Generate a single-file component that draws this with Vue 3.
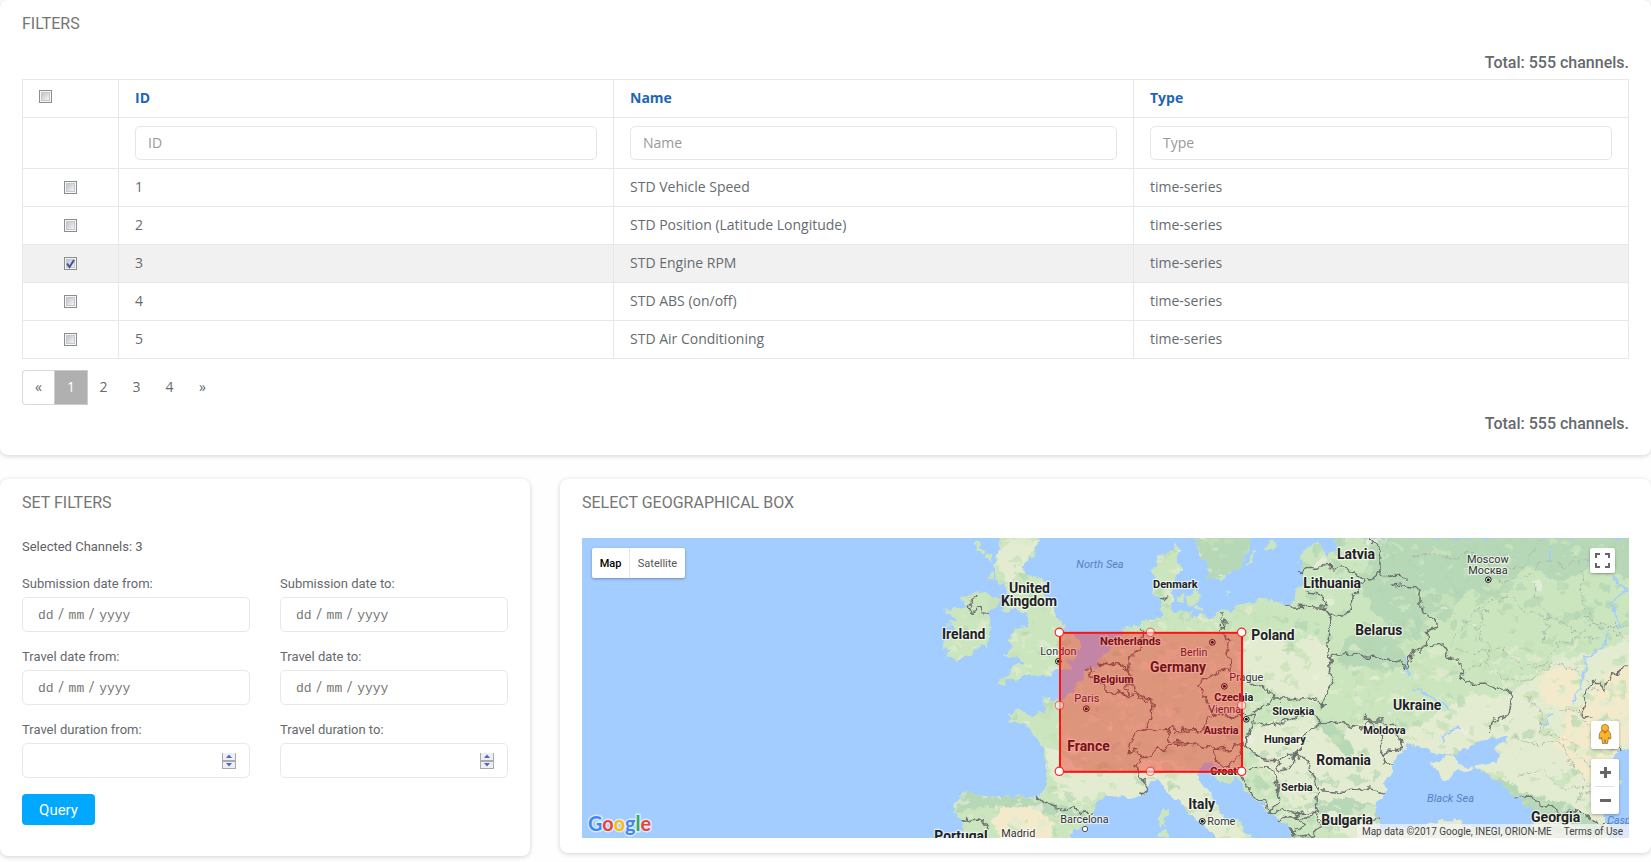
<script setup>
import { ref } from 'vue'

const rows = ref([
  { id: 1, name: 'STD Vehicle Speed', on: false },
  { id: 2, name: 'STD Position (Latitude Longitude)', on: false },
  { id: 3, name: 'STD Engine RPM', on: true },
  { id: 4, name: 'STD ABS (on/off)', on: false },
  { id: 5, name: 'STD Air Conditioning', on: false }
])
const columns = ['ID', 'Name', 'Type']
const pages = ['«', '1', '2', '3', '4', '»']
const fields = [
  { label: 'Submission date from:', date: true },
  { label: 'Submission date to:', date: true },
  { label: 'Travel date from:', date: true },
  { label: 'Travel date to:', date: true },
  { label: 'Travel duration from:', date: false },
  { label: 'Travel duration to:', date: false }
]

// Map drawing units: three per CSS pixel.
const mainland = 'M185 924L190 890 175 870 165 820 198 790 225 788 280 800 340 798 420 803 437 780 445 740 440 690 438 660 415 630 395 610 370 582 330 578 335 562 318 552 350 542 382 548 400 555 432 548 425 500 420 492 440 495 445 508 470 512 500 505 520 480 533 455 560 432 590 400 615 370 640 335 670 312 665 295 690 286 720 290 728 272 765 272 780 260 785 235 775 200 762 190 760 130 768 90 790 75 812 70 830 35 835 30 838 60 832 90 845 110 825 140 820 180 815 215 825 245 850 255 880 250 868 268 905 250 935 262 970 244 1000 240 1030 222 1075 210 1105 205 1125 222 1160 228 1185 205 1198 180 1205 120 1198 90 1225 50 1250 40 1280 75 1310 60 1300 24H2200V655L2150 665 2130 700 2160 760 2120 810 2110 860 2140 940H1180L1170 895 1140 870 1110 845 1070 815 1030 770 1010 745 965 755 945 735 955 715 925 690 900 710 895 750 935 800 955 850 1020 880 1070 940H970L930 900 890 870 850 830 810 790 770 750 740 765 725 792 690 808 650 800 610 795 585 820 590 855 545 890 510 915 505 940H185Z'
const britain = 'M290 10L415 10 413 50 400 80 365 118 385 135 420 140 435 190 470 240 475 265 490 285 488 305 520 312 540 325 540 355 520 385 505 395 510 410 480 420 430 435 390 435 370 438 350 450 330 445 310 468 290 466 320 440 345 405 372 405 375 398 350 385 305 382 330 365 335 350 325 320 355 290 378 285 378 262 385 250 340 240 305 242 310 225 335 200 320 175 310 150 290 170 285 120 280 100 300 60Z'
const ireland = 'M225 180L240 185 270 185 290 215 288 235 265 245 272 290 265 350 240 352 215 375 160 392 150 382 128 378 155 360 125 345 148 330 140 310 160 300 140 285 165 270 135 240 165 235 195 230 188 205Z'
const sweden = 'M880 10L895 60 912 90 920 130 918 150 955 145 970 155 990 120 1020 115 1030 90 1045 50 1050 10Z'
const islands = 'M862 195l25-15 12 20-5 20-25 5zM830 200l20-8 8 25-20 5zM880 225l30 8-5 12-25-4zM1100 35l20-8 5 20-20 22-5-10zM980 185l14 2-2 8-12-3zM1045 90l15-25 5 4-22 48-4-3zM782 850l15-15 5 20-8 32-15-5-5-20zM775 905l25-6 8 25h-35zM228 35l12-5 8 40-15-4zM255 65l22 5-5 22-15-12zM265 132l15-4-6 24-14 4z'
const blackSea = 'M1475 720L1465 740 1455 780 1425 830 1440 890 1470 896 1580 885 1620 870 1672 868 1710 890 1800 905 1890 890 1902 850 1850 800 1800 760 1760 735 1735 712 1720 718 1730 705 1770 700 1800 680 1780 655 1822 620 1770 625 1720 640 1680 662 1650 675 1600 668 1580 655 1530 648 1495 670 1480 700Z'
const crimea = 'M1590 702L1620 690 1650 672 1668 685 1680 705 1725 712 1715 724 1670 728 1635 750 1625 752 1620 735Z'

const pale = [
  'M440 650L500 690 590 740 700 760 720 700 800 690 900 740 930 790 980 870 1060 924H700V780L600 790 570 830 470 800Z',
  'M1040 330L1110 300 1180 350 1230 310 1290 360 1290 480 1250 520 1130 490 1080 450 1030 430 1010 370Z',
  'M1020 640L1080 580 1200 570 1260 570 1330 590 1420 565 1500 610 1580 570 1700 500 1840 490 1960 400 2200 330V940H1400L1300 900 1180 830 1100 720Z',
  'M590 740l80-30 60 50-20 60-100-25z', 'M300 30l110 8-30 70-60 60-30-90z'
]
const dark = [
  'M1430 10L2200 10 2200 150 2060 120 1980 160 1880 110 1790 200 1700 180 1640 280 1560 240 1560 330 1450 290 1380 170Z',
  'M880 10L1050 10 1030 110 920 150Z',
  'M1330 330L1440 300 1500 350 1530 400 1450 430 1400 410 1310 400Z',
  'M165 800l60-15 130 12 90 20 120 25-20 35-120-30-160-20-90 20z',
  'M1250 560l60 30 50 70 10 40-50-40-40-50-40-20z',
  'M1740 715l80 40 70 40 100 20 130 80-20 30-100-50-90-20-90-40z',
  'M1240 820l100-20 90 25-40 30-140-5z'
]
const tan = [
  'M2200 400L2100 440 2070 500 1990 560 1960 640 2010 700 2090 790 2120 700 2200 660Z',
  'M310 830l90 5 60 40-10 69H300l-20-70z',
  'M1910 420l100-10 40 50-40 80-80-30z'
]

// Seeded facets give the terrain its fine mottling.
let seed = 7349
const rnd = () => {
  seed = (seed * 1664525 + 1013904223) >>> 0
  return seed / 4294967296
}
const facets = []
for (let i = 0; i < 1900; i++) {
  const x = 130 + rnd() * 2060
  const y = 24 + rnd() * 900
  const r = 4 + rnd() * 18
  const turn = rnd() * 6
  let d = ''
  for (let k = 0; k < 5; k++) {
    const a = turn + k * 1.256
    const q = r * (0.3 + rnd() * 0.9)
    d += (k ? 'L' : 'M') + (x + Math.cos(a) * q * 1.3).toFixed(0) + ' ' + (y + Math.sin(a) * q * 0.85).toFixed(0)
  }
  const t = rnd()
  const north = y < 330 && x > 1200
  const balkans = y > 640 && x > 1000 && x < 1480
  let c = '#b4d6b0'
  if (t < 0.42) c = north || balkans ? '#b2d5b2' : '#c4e1b5'
  else if (t < 0.84) c = north ? '#cbe6bf' : '#e1ebce'
  else if (t > 0.96) c = '#f0f0e4'
  facets.push({ d: d + 'Z', c })
}

const borders = [
  'M232 190l-12 20-8 15-10 5 5 12 20 4 12-15 10 5 5 12 15 3',
  'M178 874l18-10 12 10 25-4 20 2-3 12 18 2-5 15-15 8-10 15',
  'M418 804l15 15 40 10 12 10 25-5 20 5 15 12 20-5 20 5',
  'M592 402l30 6 25-12 28 10 10 15-3 30 12 15 5 20 20 12 40 15-8 50-12 35',
  'M568 415l5 20 35 30 20 25 30-5 20 15 30-2 15 10 20 10',
  'M725 296l-5 60-30 20-5 45 5 30-12 25 10 20',
  'M775 199l28 5', 'M965 255l8 20-5 30 15 30-5 30 12 25 3 35',
  'M990 425l-25-5-35 20-35 20 8 20 15 30 5 20 30 25 50 10 20-15 40 5',
  'M740 599l50 5 20-15 15 15 50-5 40 0 5-25 20-20',
  'M800 595l10 35 45 5 35 10 30 8 60 3 50-12 10 15',
  'M740 598l-25 5-20 35-10 30 25-8 15 20 30-5 20-30 15 15 30-20 30 0',
  'M730 682l-20 20 10 40 20 15-5 30-20-4 M942 660l5 35 20 15 40-10 15-50',
  'M1045 460l30 10 30 5 20 35 50 0 50-5 50 20',
  'M1120 505l-35 30-25 10 5 30 35 15 80-25 15-10 30 0 45 20 30 3',
  'M1060 575l-20 60 0 20 45 30 40 5 50-10 25-20 20-50 45-35 70 8 50 10 25-20 40 0',
  'M1150 227l128 5 15 30-5 60-10 30 12 50-2 25 13 20-35 70-5 20',
  'M1200 128l15-15 60-3 50 0 25 10 40 30-15 30-15 20-5 40-15 5-30 15-15-5-15-20-5-20-5-20-50-10',
  'M1395 150l20-3 25-20 0-40-8-40-20-20M1440 127l30 12 20-3 30 12',
  'M1285 390l30-15 60-5 20 12 50 0 40 10 25 12 15 4 15-40 20-8 15-8 5-50 20-8 12-5-5-20-25-10-5-20-20-20 0-30-15-20-30-5-40 5',
  'M1582 350l50-5 15 35 35 20 10 55 30 5 35 0 30 20 10-10 40 20-5 30-5 35-50 20-8 25',
  'M1395 560l30 30 20 50-5 50 40 10M1440 690l30-30 15 0 25-5-5-40-25-25-30-10',
  'M1040 715l60-5 25 25 15 45-10 40-20 25M1025 740l35 60 40 30 20 15',
  'M1130 685l5 35 35-5 15-40 35 20 20 50 15 30-10 40 10 30-35 20-50-5-30 15',
  'M1260 782l50 5 60 0 30-10 55 10M1110 850l40-15 40 20 20 30-30 30-10-20',
  'M1180 865l25-15 40 0 20 35-30 30-50 5-10-25M1260 870l80 10 100-12',
  'M1847 802l35-5 40 30 25 0 30 20 60-10 35 30 50 15M2188 408l-60 30-15 45-30-30-25 30-5 40-10 30 35 15M2140 650l25 18'
]
const provinces = [
  'M1540 80l60-10 50 20 40-20 60 10 50 80 80-20 50-50 60 20 60-20 100 10',
  'M1660 330l40-60 60-50 70-20 50 50 80 10 80 50 60-40 80 60',
  'M1660 350l60 20 80-10 70 50 70-10 30-60 60-20 100 10',
  'M1690 420l60-20 60 50 80 0 70-50 70 20 70 70',
  'M1870 500l60 40-10 60 70 20 50 50 40 60 80 20',
  'M1840 620l60 30 80-20 30 70 50 60-30 60',
  'M1900 160l10 60 40 40-20 80M1760 240l-30 60 40 50-10 60M2020 60l30 60-10 100 50 70',
  'M2050 260l50 30 80 0M1850 740l80-20 60 60 50-10 60 30',
  'M1800 60l30 60 50-20 40-70M1980 540l50 0 50 70 40-10'
]
const rivers = [
  'M1955 45l2 60M2140 140l35 35-38 50 28 70M2130 300l-20 50-50 35-10 60-30 70',
  'M1540 475l40 20 40 20 30 25M1630 630l20-30 30-2M1950 555l-20 40', 'M1520 380v60'
]
const labels = [
  ['United', 327, 189, 123, 'b'], ['Kingdom', 303, 228, 168, 'b'], ['Ireland', 126, 327, 130, 'b'],
  ['North Sea', 529, 114, 142, 's'], ['London', 421, 375, 108, 'c'], ['Netherlands', 600, 345, 182, 'm'],
  ['Belgium', 580, 458, 121, 'm'], ['Paris', 523, 515, 75, 'c'], ['France', 502, 662, 127, 'b'],
  ['Germany', 750, 425, 168, 'b'], ['Barcelona', 481, 878, 145, 'c'], ['Madrid', 304, 922, 102, 'c'],
  ['Portugal', 103, 934, 160, 'b'], ['Denmark', 759, 173, 134, 'm'], ['Berlin', 841, 377, 81, 'c'],
  ['Prague', 988, 452, 102, 'c'], ['Czechia', 943, 513, 117, 'm'], ['Vienna', 925, 548, 98, 'c'],
  ['Austria', 911, 611, 105, 'm'], ['Croatia', 931, 734, 106, 'm'], ['Poland', 1054, 329, 130, 'b'],
  ['Latvia', 1311, 86, 114, 'b'], ['Lithuania', 1210, 173, 173, 'b'], ['Belarus', 1366, 315, 141, 'b'],
  ['Slovakia', 1117, 554, 126, 'm'], ['Hungary', 1092, 640, 125, 'm'], ['Romania', 1249, 705, 164, 'b'],
  ['Moldova', 1390, 612, 127, 'm'], ['Serbia', 1143, 782, 95, 'm'], ['Italy', 865, 838, 80, 'b'],
  ['Bulgaria', 1264, 884, 155, 'b'], ['Rome', 922, 884, 84, 'c'], ['Ukraine', 1479, 540, 145, 'b'],
  ['Moscow', 1701, 99, 125, 'c'], ['Москва', 1705, 132, 118, 'c'], ['Black Sea', 1581, 815, 141, 's'],
  ['Georgia', 1893, 876, 148, 'b'], ['Caspian Sea', 2122, 883, 172, 's']
]
const capitals = [[475, 394], [559, 536], [937, 337], [973, 469], [1039, 568], [907, 874], [1765, 149]]
const corners = [[478, 307], [1025, 307], [478, 724], [1025, 724]]
const middles = [[751, 307], [478, 526], [1025, 526], [751, 724]]
</script>

<template>
  <main class="page">
    <section class="card channels">
      <h2>FILTERS</h2>
      <p class="total">Total: 555 channels.</p>
      <table>
        <colgroup><col class="c0"><col class="c1"><col class="c2"><col class="c1"></colgroup>
        <tbody>
          <tr>
            <th class="all"><span class="check"></span></th>
            <th v-for="c in columns" :key="c">{{ c }}</th>
          </tr>
          <tr class="search">
            <td></td>
            <td v-for="c in columns" :key="c"><input type="text" :placeholder="c"></td>
          </tr>
          <tr v-for="r in rows" :key="r.id" :class="{ picked: r.on }">
            <td class="pick">
              <span class="check"><svg v-if="r.on" viewBox="0 0 13 13"><path d="M3 6.5L5.5 10 10 3" /></svg></span>
            </td>
            <td>{{ r.id }}</td>
            <td>{{ r.name }}</td>
            <td>time-series</td>
          </tr>
        </tbody>
      </table>
      <nav class="pager"><a v-for="(p, i) in pages" :key="p" :class="{ first: i === 0, current: i === 1 }">{{ p }}</a></nav>
      <p class="total bottom">Total: 555 channels.</p>
    </section>

    <div class="lower">
      <section class="card set">
        <h2>SET FILTERS</h2>
        <p class="selected">Selected Channels: 3</p>
        <form class="fields" @submit.prevent>
          <div v-for="f in fields" :key="f.label" class="field">
            <label>{{ f.label }}</label>
            <div class="box">
              <div v-if="f.date" class="date"><span>dd</span><i>/</i><span>mm</span><i>/</i><span>yyyy</span></div>
              <svg v-else class="spin" viewBox="0 0 14 16">
                <rect width="14" height="16" fill="#a9a9b2" />
                <rect x="1" y="0" width="12" height="7" fill="#efeff1" />
                <rect x="1" y="9" width="12" height="6" fill="#efeff1" />
                <path d="M7 1.5L10 5H4zM7 13.5L10 10H4z" fill="#5168b8" />
              </svg>
            </div>
          </div>
        </form>
        <button class="query">Query</button>
      </section>

      <section class="card geo">
        <h2>SELECT GEOGRAPHICAL BOX</h2>
        <div class="map">
          <svg class="canvas" viewBox="-954 24 3141 900" preserveAspectRatio="none">
            <defs>
              <clipPath id="land"><path :d="mainland" /><path :d="britain" /><path :d="ireland" /><path :d="sweden" /></clipPath>
              <filter id="rough" filterUnits="userSpaceOnUse" x="0" y="0" width="2210" height="950" color-interpolation-filters="sRGB">
                <feTurbulence type="fractalNoise" baseFrequency=".035" numOctaves="3" seed="4" />
                <feDisplacementMap in="SourceGraphic" scale="34" xChannelSelector="R" yChannelSelector="G" />
              </filter>
            </defs>
            <g filter="url(#rough)">
              <g fill="#cbe6bf">
                <path :d="mainland" /><path :d="britain" /><path :d="ireland" /><path :d="sweden" /><path :d="islands" />
              </g>
              <g clip-path="url(#land)">
                <path v-for="d in pale" :key="d" :d="d" fill="#e3ecd0" />
                <path v-for="d in dark" :key="d" :d="d" fill="#b7d8b7" />
                <path v-for="d in tan" :key="d" :d="d" fill="#f3eacc" />
                <path v-for="(f, i) in facets" :key="i" :d="f.d" :fill="f.c" opacity=".65" />
              </g>
              <path :d="blackSea" fill="#a3ccff" />
              <path :d="crimea" fill="#e3ecd0" />
              <path v-for="d in rivers" :key="d" :d="d" class="river" />
              <path v-for="d in provinces" :key="d" :d="d" class="province" />
              <path v-for="d in borders" :key="d" :d="d" class="border" />
            </g>
            <g v-for="c in capitals" :key="c[0]">
              <circle :cx="c[0]" :cy="c[1]" r="8.5" fill="#fff" stroke="#111" stroke-width="3" />
              <circle :cx="c[0]" :cy="c[1]" r="4.5" fill="#111" />
            </g>
            <circle cx="555" cy="897" r="8" fill="#fff" stroke="#333" stroke-width="2.5" />
            <text v-for="l in labels" :key="l[0]" :x="l[1]" :y="l[2]" :textLength="l[3]" lengthAdjust="spacingAndGlyphs" :class="'t-' + l[4]">{{ l[0] }}</text>
            <rect x="480" y="308.5" width="546" height="417" fill="#f00" fill-opacity=".35" stroke="#f11" stroke-width="6" />
            <circle v-for="(m, i) in middles" :key="'m' + i" :cx="m[0]" :cy="m[1]" r="12.5" class="knob half" />
            <circle v-for="(m, i) in corners" :key="'c' + i" :cx="m[0]" :cy="m[1]" r="12.5" class="knob" />
          </svg>
          <div class="kind"><b>Map</b><span>Satellite</span></div>
          <svg class="brand" viewBox="0 0 70 30">
            <text x="5" y="23" textLength="63" lengthAdjust="spacingAndGlyphs"><tspan fill="#4285f4">G</tspan><tspan fill="#ea4335">o</tspan><tspan fill="#fbbc05">o</tspan><tspan fill="#4285f4">g</tspan><tspan fill="#34a853">l</tspan><tspan fill="#ea4335">e</tspan></text>
          </svg>
          <div class="full"><svg viewBox="0 0 25 25"><path d="M6 10V6h4M15 6h4v4M19 15v4h-4M10 19H6v-4" /></svg></div>
          <div class="peg">
            <svg viewBox="0 0 28 28">
              <path d="M10.5 9.5h7l2 3 .5 5-2 .5-.5-2-1 6.500h-2l-.5-4-.5 4h-2l-1-6.500-.5 2-2-.5.5-5z" fill="#fbb527" stroke="#8d7440" stroke-width=".8" />
              <circle cx="14" cy="7" r="3.600" fill="#fbb527" stroke="#8d7440" stroke-width=".8" />
              <path d="M11.500 10.300h5L14 13z" fill="#e8651d" />
            </svg>
          </div>
          <div class="zoom">
            <svg viewBox="0 0 28 55"><path d="M9 13.500h11M14.500 8v11M9 41.500h11" stroke="#666" stroke-width="3" /><path d="M4 27.500h19" stroke="#e0e0e0" /></svg>
          </div>
          <div class="credit"><span>Map data ©2017 Google, INEGI, ORION-ME</span><span>Terms of Use</span></div>
        </div>
      </section>
    </div>
  </main>
</template>

<style>
body { background: #fefefe; overflow: hidden; }
</style>

<style scoped>
* { box-sizing: border-box; }
.page { width: 1651px; height: 862px; overflow: hidden; font-family: Roboto, "Liberation Sans", sans-serif; color: #666a6e; }
.card { background: #fff; border-radius: 8px; box-shadow: 0 1px 5px rgba(0, 0, 0, .18); }
h2 { margin: 0; font-size: 16px; font-weight: 400; line-height: 20px; color: #757575; }
.channels { height: 455px; padding: 14px 22px 0; }
.total { margin: 19px 0 0; font-size: 16px; line-height: 20px; font-weight: 500; text-align: right; color: #66696d; }
.total.bottom { margin-top: 9px; }
table { width: 1607px; margin-top: 6px; table-layout: fixed; border-collapse: collapse; font: 14px/20px "Open Sans", sans-serif; color: #666b70; }
.c0 { width: 96px; } .c1 { width: 495px; } .c2 { width: 520px; }
th, td { height: 38px; padding: 0 16px 2px; border: 1px solid #e8e8e8; text-align: left; vertical-align: middle; }
th { color: #1e66b5; font-weight: 700; }
.search td { height: 51px; padding-bottom: 0; }
.picked { background: #f1f1f1; }
.pick { text-align: center; }
input { display: block; width: 100%; height: 34px; padding: 0 12px 2px; border: 1px solid #e6e6e6; border-radius: 5px; font: 14px "Open Sans", sans-serif; background: #fff; }
input::placeholder { color: #999; opacity: 1; }
.check { display: inline-block; width: 13px; height: 13px; vertical-align: middle; border: 1px solid #8b8d8e; background: linear-gradient(135deg, #b4b8c0, #f4f4f4 85%); box-shadow: inset 0 0 0 1px #f5f5f5, inset 0 0 0 2px #c4c7cb; }
.all .check { margin: -5px 0 0; }
.check svg { display: block; width: 13px; height: 13px; margin: -1px; }
.check path { fill: none; stroke: #3c549e; stroke-width: 2; }
.pager { display: flex; height: 35px; margin-top: 11px; font: 14px/31px "Open Sans", sans-serif; text-align: center; }
.pager a { width: 33px; border: 1px solid transparent; }
.pager .first { border-color: #dadada; border-right: 0; border-radius: 4px 0 0 4px; width: 32px; }
.pager .current { background: #b0b0b0; color: #fff; border-color: #ccc; width: 34px; margin-right: -1px; }
.lower { display: flex; justify-content: space-between; align-items: flex-start; margin-top: 24px; }
.lower .card { padding: 14px 22px 0; }
.set { width: 530px; height: 377px; }
.geo { width: 1091px; height: 374px; }
.selected { margin: 24px 0 0; font-size: 13px; line-height: 20px; color: #5f6266; }
.fields { display: grid; grid-template-columns: 228px 228px; column-gap: 30px; margin-top: 17px; }
.field { height: 73px; }
label { display: block; font-size: 13px; line-height: 20px; height: 23px; color: #66696d; }
.box { display: flex; align-items: center; height: 35px; border: 1px solid #e8e8e8; border-radius: 5px; padding: 0 13px 0 15px; }
.date { display: flex; align-items: baseline; font: 13px "Liberation Mono", monospace; color: #777; margin-top: -1px; }
.date i { width: 15px; text-align: center; font-family: Roboto, sans-serif; font-style: normal; font-size: 14px; }
.spin { width: 14px; height: 16px; margin-left: auto; }
.query { display: block; width: 73px; height: 31px; margin-top: 1px; padding: 0; border: 0; border-radius: 4px; background: #00a8ff; color: #fff; font: 15px Roboto, sans-serif; }
.map { position: relative; width: 1047px; height: 300px; margin-top: 25px; overflow: hidden; background: #a3ccff; }
.canvas { display: block; width: 1047px; height: 300px; }
.border { fill: none; stroke: #6c706e; stroke-width: 4.5; stroke-linejoin: round; }
.province { fill: none; stroke: #a3aaa2; stroke-width: 3; stroke-dasharray: 10 5; opacity: .8; }
.river { fill: none; stroke: #a3ccff; stroke-width: 6; }
text { font-family: Roboto, sans-serif; }
.t-b, .t-m, .t-c { fill: #222; stroke: #fff; stroke-width: 7; stroke-opacity: .65; paint-order: stroke; stroke-linejoin: round; }
.t-b { font-size: 42px; font-weight: 700; }
.t-m { font-size: 33px; font-weight: 700; }
.t-c { font-size: 32px; fill: #333; }
.t-s { font-size: 33px; font-style: italic; fill: #5482c8; }
.knob { fill: #fff; stroke: #f22; stroke-width: 3.500; }
.half { opacity: .55; }
.kind, .full, .peg, .zoom { position: absolute; background: #fff; border-radius: 2px; box-shadow: 0 1px 3px rgba(0, 0, 0, .3); }
.kind { left: 10px; top: 10px; width: 93px; height: 30px; display: flex; font-size: 11px; line-height: 31px; text-align: center; }
.kind b { width: 38px; color: #000; font-weight: 500; border-right: 1px solid #e6e6e6; }
.kind span { flex: 1; color: #565656; }
.full { right: 14px; top: 10px; width: 25px; height: 25px; }
.full path { fill: none; stroke: #666; stroke-width: 2; }
.peg { right: 10px; top: 183px; width: 28px; height: 28px; }
.zoom { right: 10px; top: 221px; width: 28px; height: 55px; }
.full svg, .peg svg, .zoom svg { display: block; width: 100%; height: 100%; }
.brand { position: absolute; left: 1px; top: 270px; width: 70px; height: 30px; }
.brand text { font: 700 21px Lato, sans-serif; stroke: #fff; stroke-opacity: .6; stroke-width: 3; paint-order: stroke; }
.credit { position: absolute; right: 0; bottom: 0; height: 14px; display: flex; gap: 12px; padding: 0 6px 0 5px; font-size: 10px; line-height: 15px; color: #444; background: rgba(245, 245, 245, .7); white-space: nowrap; }
</style>
